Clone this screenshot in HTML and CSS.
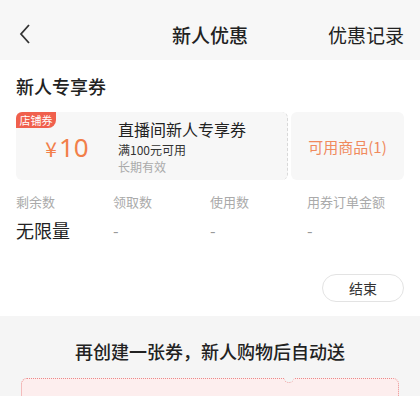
FILE: index.html
```html
<!DOCTYPE html>
<html lang="zh">
<head>
<meta charset="utf-8">
<link rel="stylesheet" href="styles.css">
</head>
<body>
<div class="header">
  <svg class="back" width="14" height="22" viewBox="0 0 14 22"><path d="M11 2 L3 11 L11 20" fill="none" stroke="#333" stroke-width="1.8"/></svg>
  <div class="title">新人优惠</div>
  <div class="record">优惠记录</div>
</div>
<div class="main">
  <div class="section-title">新人专享券</div>
  <div class="coupon">
    <div class="coupon-left">
      <div class="badge">店铺券</div>
      <div class="price"><span class="yen">¥</span><span class="num">10</span></div>
      <div class="info">
        <div class="name">直播间新人专享券</div>
        <div class="cond">满100元可用</div>
        <div class="valid">长期有效</div>
      </div>
    </div>
    <div class="coupon-right">可用商品(1)</div>
  </div>
  <div class="stats">
    <div class="stat"><div class="label">剩余数</div><div class="value big">无限量</div></div>
    <div class="stat"><div class="label">领取数</div><div class="value">-</div></div>
    <div class="stat"><div class="label">使用数</div><div class="value">-</div></div>
    <div class="stat"><div class="label">用券订单金额</div><div class="value">-</div></div>
  </div>
  <div class="actions"><div class="end-btn">结束</div></div>
</div>
<div class="create">
  <div class="create-title">再创建一张券，新人购物后自动送</div>
  <div class="create-box"><span class="notch"></span></div>
</div>
</body>
</html>
```
FILE: styles.css
```css
* { box-sizing: border-box; }
body {
  margin: 0;
  width: 420px;
  height: 396px;
  overflow: hidden;
  font-family: "Noto Sans CJK SC", "Noto Sans", sans-serif;
  color: #222;
  background: #fff;
}
.header {
  position: relative;
  height: 60px;
  background: #f7f7f7;
  display: flex;
  align-items: center;
  padding: 0 16px 0 18px;
}
.back { display: block; margin-top: 8px; }
.title {
  position: absolute;
  left: 0; right: 0;
  top: 22px;
  text-align: center;
  font-size: 19px;
  line-height: 26px;
  font-weight: 500;
  color: #222;
}
.record {
  margin-left: auto;
  margin-top: 10px;
  font-size: 19px;
  line-height: 26px;
  color: #222;
}
.main { padding: 0 16px; }
.section-title {
  font-size: 18px;
  font-weight: 500;
  line-height: 26px;
  padding-top: 13px;
  height: 52px;
}
.coupon {
  display: flex;
  height: 68px;
  gap: 3px;
}
.coupon-left {
  position: relative;
  width: 272px;
  background: #f7f7f7;
  border-radius: 6px;
  display: flex;
  align-items: center;
  border-right: 1px dashed #d9d9d9;
}
.badge {
  position: absolute;
  left: 0; top: 0;
  width: 40px;
  height: 16px;
  background: #f0604d;
  color: #fff;
  font-size: 11px;
  line-height: 16px;
  text-align: center;
  border-radius: 6px 0 8px 0;
}
.price {
  width: 102px;
  text-align: center;
  color: #f27f4a;
  padding-top: 2px;
}
.yen { font-size: 21px; margin-right: 2px; }
.num { font-size: 26px; font-family: "Noto Sans", sans-serif; }
.info { padding-top: 1px; }
.name { font-size: 16px; line-height: 23px; color: #222; }
.cond { font-size: 12px; line-height: 17px; color: #333; }
.valid { font-size: 12px; line-height: 17px; color: #aaa; }
.coupon-right {
  flex: 1;
  background: #f7f7f7;
  border-radius: 6px;
  display: flex;
  align-items: center;
  justify-content: center;
  font-size: 15px;
  color: #f08a5d;
}
.stats {
  display: grid;
  grid-template-columns: 97px 97px 97px 1fr;
  padding-top: 12px;
}
.label { font-size: 13px; line-height: 20px; color: #aaa; }
.value { font-size: 16px; line-height: 26px; color: #999; margin-top: 5px; }
.value.big { font-size: 18px; color: #222; }
.actions {
  display: flex;
  justify-content: flex-end;
  padding-top: 31px;
  height: 73px;
}
.end-btn {
  width: 82px;
  height: 28px;
  border: 1px solid #e3e3e3;
  border-radius: 14px;
  text-align: center;
  font-size: 14px;
  line-height: 26px;
  color: #333;
}
.create {
  background: #f5f5f5;
  padding: 22px 21px 0;
  height: 200px;
}
.create-title {
  text-align: center;
  font-size: 18px;
  font-weight: 500;
  line-height: 26px;
  color: #222;
}
.create-box {
  position: relative;
  margin-top: 14px;
  height: 60px;
  background: #fdeeee;
  border: 1.5px dotted #ec8a8a;
  border-radius: 6px;
}
.notch {
  position: absolute;
  left: 262px;
  top: -2px;
  width: 10px;
  height: 6px;
  background: #f5f5f5;
  border-bottom: 1.5px dotted #ec8a8a;
  border-radius: 0 0 6px 6px;
}
```
